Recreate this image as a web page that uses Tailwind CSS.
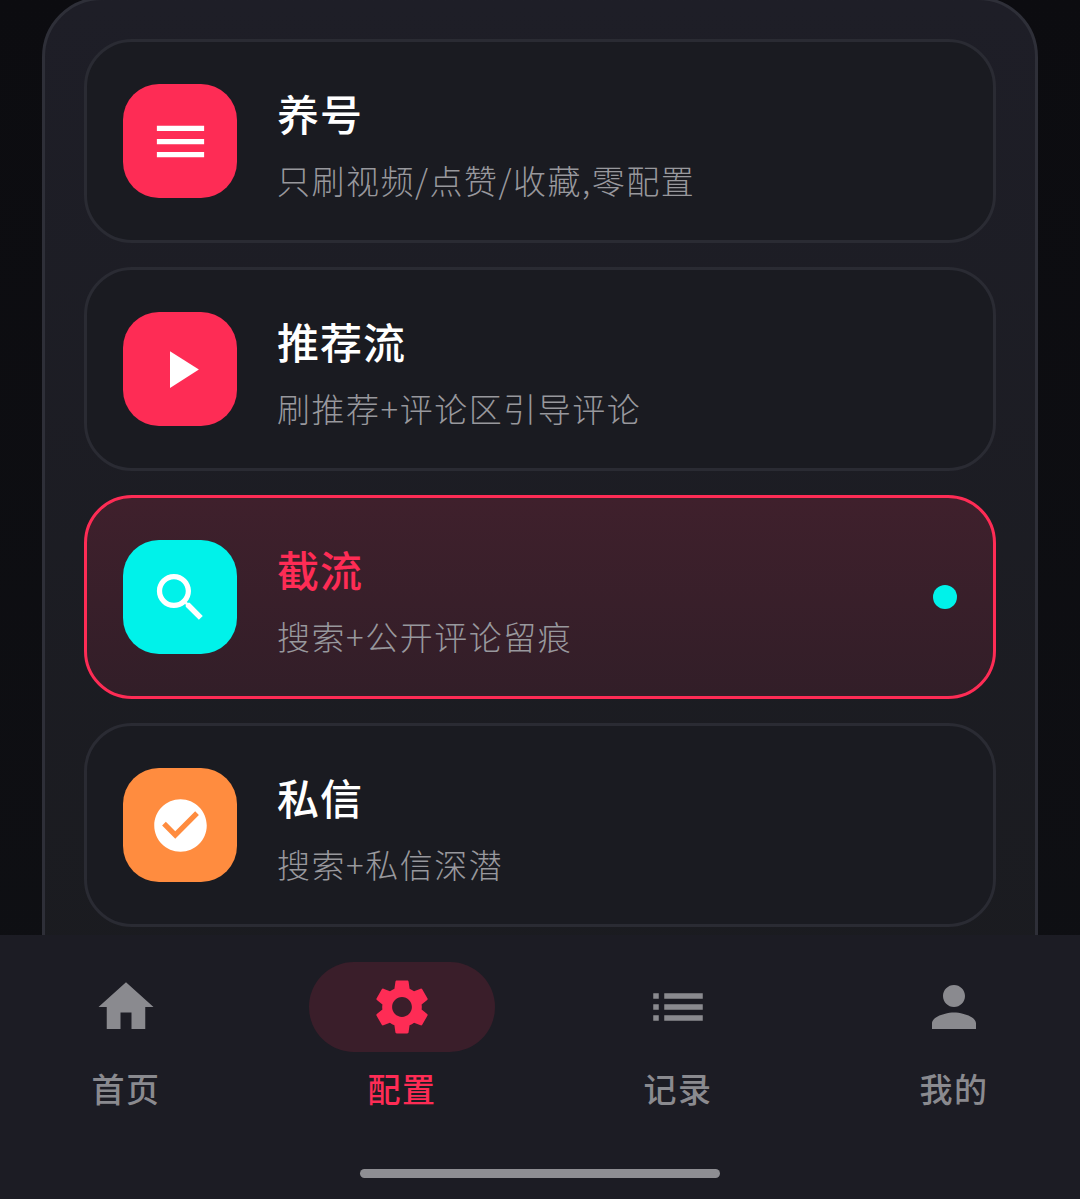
<!DOCTYPE html>
<html lang="zh-CN"><head><meta charset="utf-8"><script src="https://cdn.jsdelivr.net/npm/@tailwindcss/browser@4"></script></head>
<body class="m-0 bg-[#0e0f13]">
<div class="relative w-[1080px] h-[1199px] overflow-hidden flex flex-col bg-gradient-to-b from-[#0c0c10] to-[#0f1014] font-['Noto_Sans_CJK_SC','Noto_Sans',sans-serif]">
  <main class="flex-1 min-h-0 px-[42px] overflow-hidden">
    <div class="-mt-[3px] h-[1100px] border-[3px] border-[#2e2f38] rounded-[60px] bg-gradient-to-b from-[#1e1e27] to-[#1a1b1f] p-[39px] flex flex-col gap-6">
      <div class="h-[204px] shrink-0 rounded-[48px] border-[3px] border-[#2a2b33] bg-[#1a1b21] px-[36px] flex items-center">
        <div class="w-[114px] h-[114px] rounded-[36px] bg-[#fe2c55] flex items-center justify-center">
          <svg class="w-[63px] h-[63px] fill-white" viewBox="0 0 24 24"><path d="M3 18h18v-2H3v2zm0-5h18v-2H3v2zm0-7v2h18V6H3z"/></svg>
        </div>
        <div class="ml-[40px] pt-[7px] flex flex-col">
          <div class="text-[42px] leading-[48px] font-medium tracking-[1px] text-white">养号</div>
          <div class="mt-[23px] text-[33px] leading-[40px] tracking-[1.5px] font-light text-[#98989d]">只刷视频/点赞/收藏,零配置</div>
        </div>
      </div>
      <div class="h-[204px] shrink-0 rounded-[48px] border-[3px] border-[#2a2b33] bg-[#1a1b21] px-[36px] flex items-center">
        <div class="w-[114px] h-[114px] rounded-[36px] bg-[#fe2c55] flex items-center justify-center">
          <svg class="w-[63px] h-[63px] fill-white" viewBox="0 0 24 24"><path d="M8 5v14l11-7z"/></svg>
        </div>
        <div class="ml-[40px] pt-[7px] flex flex-col">
          <div class="text-[42px] leading-[48px] font-medium tracking-[1px] text-white">推荐流</div>
          <div class="mt-[23px] text-[33px] leading-[40px] tracking-[1.5px] font-light text-[#98989d]">刷推荐+评论区引导评论</div>
        </div>
      </div>
      <div class="h-[204px] shrink-0 rounded-[48px] border-[3px] border-[#fe2c55] bg-gradient-to-b from-[#3f202c] to-[#321e28] px-[36px] flex items-center">
        <div class="w-[114px] h-[114px] rounded-[36px] bg-[#00f2ea] flex items-center justify-center">
          <svg class="w-[63px] h-[63px] fill-white" viewBox="0 0 24 24"><path d="M15.5 14h-.79l-.28-.27C15.41 12.59 16 11.11 16 9.5 16 5.91 13.09 3 9.5 3S3 5.91 3 9.5 5.91 16 9.5 16c1.61 0 3.09-.59 4.23-1.57l.27.28v.79l5 4.99L20.49 19l-4.99-5zm-6 0C7.01 14 5 11.99 5 9.5S7.01 5 9.5 5 14 7.01 14 9.5 11.99 14 9.5 14z"/></svg>
        </div>
        <div class="ml-[40px] pt-[7px] flex flex-col flex-1">
          <div class="text-[42px] leading-[48px] font-medium tracking-[1px] text-[#fe2c55]">截流</div>
          <div class="mt-[23px] text-[33px] leading-[40px] tracking-[1.5px] font-light text-[#98989d]">搜索+公开评论留痕</div>
        </div>
        <div class="w-6 h-6 rounded-full bg-[#00f2ea]"></div>
      </div>
      <div class="h-[204px] shrink-0 rounded-[48px] border-[3px] border-[#2a2b33] bg-[#1a1b21] px-[36px] flex items-center">
        <div class="w-[114px] h-[114px] rounded-[36px] bg-[#ff8c3f] flex items-center justify-center">
          <svg class="w-[63px] h-[63px] fill-white" viewBox="0 0 24 24"><path d="M12 2C6.48 2 2 6.48 2 12s4.48 10 10 10 10-4.48 10-10S17.52 2 12 2zm-2 15l-5-5 1.41-1.41L10 14.17l7.59-7.59L19 8l-9 9z"/></svg>
        </div>
        <div class="ml-[40px] pt-[7px] flex flex-col">
          <div class="text-[42px] leading-[48px] font-medium tracking-[1px] text-white">私信</div>
          <div class="mt-[23px] text-[33px] leading-[40px] tracking-[1.5px] font-light text-[#98989d]">搜索+私信深潜</div>
        </div>
      </div>
    </div>
  </main>
  <nav class="relative z-10 h-[264px] shrink-0 bg-[#1c1c24] px-[33px] pt-[27px] flex justify-between items-start">
    <div class="w-[186px] flex flex-col items-center">
      <div class="w-[186px] h-[90px] flex items-center justify-center"><svg class="w-[66px] h-[66px] fill-[#8a8a8f]" viewBox="0 0 24 24"><path d="M10 20v-6h4v6h5v-8h3L12 3 2 12h3v8z"/></svg></div>
      <div class="mt-[16px] text-[33px] leading-[40px] tracking-[1.5px] font-medium text-[#8a8a8f]">首页</div>
    </div>
    <div class="w-[186px] flex flex-col items-center">
      <div class="w-[186px] h-[90px] rounded-[45px] bg-[#3a1e2a] flex items-center justify-center"><svg class="w-[66px] h-[66px] fill-[#fe2c55]" viewBox="0 0 24 24"><path d="M19.14 12.94c.04-.3.06-.61.06-.94 0-.32-.02-.64-.07-.94l2.03-1.58c.18-.14.23-.41.12-.61l-1.92-3.32c-.12-.22-.37-.29-.59-.22l-2.39.96c-.5-.38-1.03-.7-1.62-.94l-.36-2.54c-.04-.24-.24-.41-.48-.41h-3.84c-.24 0-.43.17-.47.41l-.36 2.54c-.59.24-1.13.57-1.62.94l-2.39-.96c-.22-.08-.47 0-.59.22L2.74 8.87c-.12.21-.08.47.12.61l2.03 1.58c-.05.3-.09.63-.09.94s.02.64.07.94l-2.03 1.58c-.18.14-.23.41-.12.61l1.92 3.32c.12.22.37.29.59.22l2.39-.96c.5.38 1.03.7 1.62.94l.36 2.54c.05.24.24.41.48.41h3.84c.24 0 .44-.17.47-.41l.36-2.54c.59-.24 1.13-.56 1.62-.94l2.39.96c.22.08.47 0 .59-.22l1.92-3.32c.12-.22.07-.47-.12-.61l-2.01-1.58zM12 15.6c-1.98 0-3.6-1.62-3.6-3.6s1.62-3.6 3.6-3.6 3.6 1.62 3.6 3.6-1.62 3.6-3.6 3.6z"/></svg></div>
      <div class="mt-[16px] text-[33px] leading-[40px] tracking-[1.5px] font-medium text-[#fe2c55]">配置</div>
    </div>
    <div class="w-[186px] flex flex-col items-center">
      <div class="w-[186px] h-[90px] flex items-center justify-center"><svg class="w-[66px] h-[66px] fill-[#8a8a8f]" viewBox="0 0 24 24"><path d="M3 13h2v-2H3v2zm0 4h2v-2H3v2zm0-8h2V7H3v2zm4 4h14v-2H7v2zm0 4h14v-2H7v2zM7 7v2h14V7H7z"/></svg></div>
      <div class="mt-[16px] text-[33px] leading-[40px] tracking-[1.5px] font-medium text-[#8a8a8f]">记录</div>
    </div>
    <div class="w-[186px] flex flex-col items-center">
      <div class="w-[186px] h-[90px] flex items-center justify-center"><svg class="w-[66px] h-[66px] fill-[#8a8a8f]" viewBox="0 0 24 24"><path d="M12 12c2.21 0 4-1.79 4-4s-1.79-4-4-4-4 1.79-4 4 1.79 4 4 4zm0 2c-2.67 0-8 1.34-8 4v2h16v-2c0-2.66-5.33-4-8-4z"/></svg></div>
      <div class="mt-[16px] text-[33px] leading-[40px] tracking-[1.5px] font-medium text-[#8a8a8f]">我的</div>
    </div>
    <div class="absolute left-[360px] top-[234px] w-[360px] h-[9px] rounded-full bg-[#8e8e93]"></div>
  </nav>
</div>
</body></html>
